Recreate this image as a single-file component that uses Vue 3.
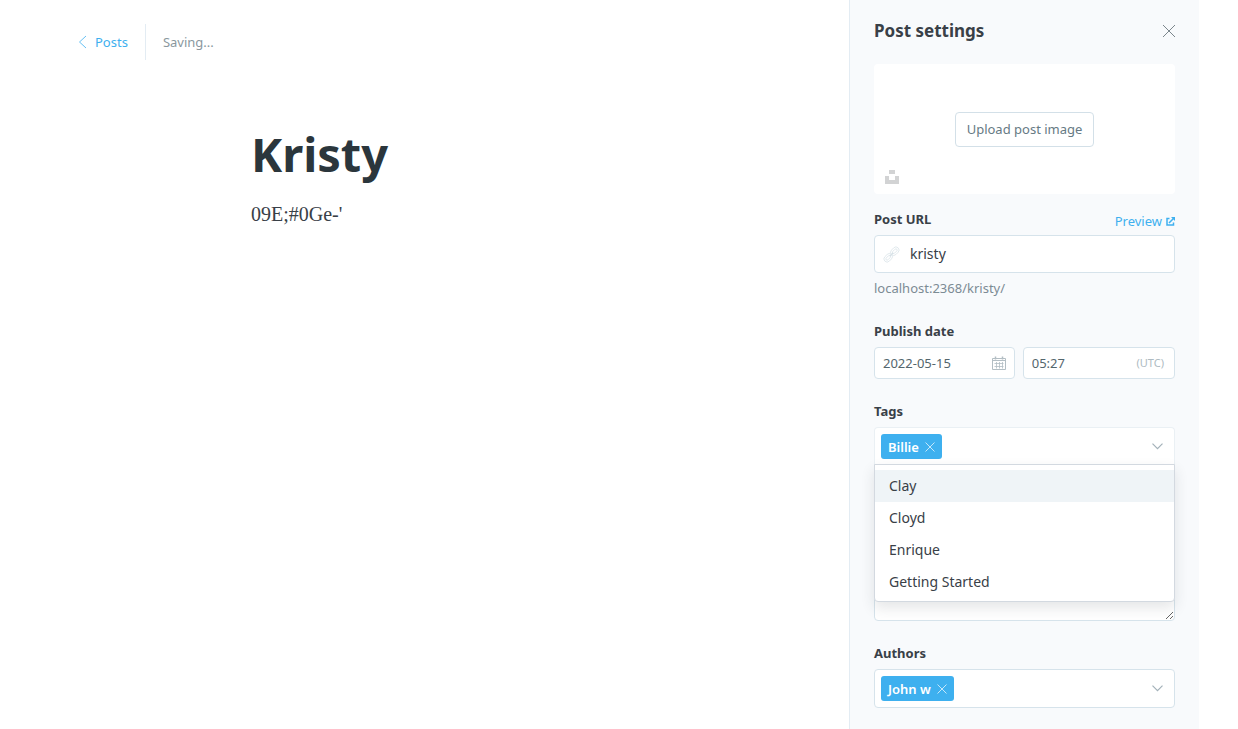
<script setup>
import { ref } from 'vue'

const slug = ref('kristy')
const date = ref('2022-05-15')
const time = ref('05:27')
const excerpt = ref('')
const options = ['Clay', 'Cloyd', 'Enrique', 'Getting Started']
const highlighted = ref(0)
</script>

<template>
  <div class="page">
    <main class="editor">
      <header class="topbar">
        <a class="back" href="#posts">
          <svg width="9" height="14" viewBox="0 0 9 14" fill="none" stroke="currentColor" stroke-width=".8"><path d="M8 1 1.500 7 8 13" /></svg>
          Posts
        </a>
        <span class="status">Saving...</span>
      </header>
      <article class="post">
        <h1>Kristy</h1>
        <p>09E;#0Ge-'</p>
      </article>
    </main>

    <aside class="settings">
      <header class="settings-head">
        <h2>Post settings</h2>
        <button class="icon-button" type="button" aria-label="Close">
          <svg width="14" height="14" viewBox="0 0 14 14" fill="none" stroke="#5a686f" stroke-width=".8"><path d="M1 1 13 13M13 1 1 13" /></svg>
        </button>
      </header>

      <section class="uploader">
        <button class="upload" type="button">Upload post image</button>
        <button class="icon-button unsplash" type="button" aria-label="Unsplash">
          <svg width="14" height="14" viewBox="0 0 14 14" fill="#d2d3d4"><path d="M4 0h6v4H4zM0 6h4v4h6V6h4v8H0z" /></svg>
        </button>
      </section>

      <div class="field">
        <div class="label-row">
          <label for="url">Post URL</label>
          <a class="preview" href="#preview">
            Preview
            <svg width="9" height="9" viewBox="0 0 18 18" fill="none" stroke="currentColor" stroke-width="3"><path d="M7 3H2v13h13v-5M6 12 15 3" /><path d="M10 0h8v8z" fill="currentColor" stroke="none" /></svg>
          </a>
        </div>
        <div class="control url">
          <svg width="15" height="15" viewBox="0 0 24 24" fill="none" stroke="#d6e0e6" stroke-width="1.100">
            <g transform="rotate(-45 12 12)">
              <rect x="-3" y="7" width="15" height="10" rx="5" />
              <rect x="0" y="10" width="9" height="4" rx="2" />
              <rect x="12" y="7" width="15" height="10" rx="5" />
              <rect x="15" y="10" width="9" height="4" rx="2" />
              <path d="M8 12h8" stroke-width="2" />
            </g>
          </svg>
          <input id="url" v-model="slug" type="text" />
        </div>
        <p class="help">localhost:2368/kristy/</p>
      </div>

      <div class="field">
        <label for="date">Publish date</label>
        <div class="date-row">
          <div class="control small date">
            <input id="date" v-model="date" type="text" />
            <svg width="14" height="14" viewBox="0 0 14 14" fill="none" stroke="#b3bec4"><path d="M.5 2.500h13v11H.5zM.5 4.500h13" /><path d="M2.500 7.500h9M2.500 10.500h9M4.500 6v6.500M7.500 6v6.500M10.500 6v6.500" stroke-width=".8" /><path d="M3.500.5v3M10.500.5v3" stroke-width="1.500" /></svg>
          </div>
          <div class="control small time">
            <input v-model="time" type="text" aria-label="Publish time" />
            <small>(UTC)</small>
          </div>
        </div>
      </div>

      <div class="field">
        <label for="tags">Tags</label>
        <div class="select-wrap">
          <div class="control select open">
            <span class="token">Billie
              <button type="button" aria-label="Remove Billie">
                <svg width="10" height="10" viewBox="0 0 10 10" fill="none" stroke="currentColor"><path d="M.5.5l9 9M9.500.5l-9 9" /></svg>
              </button>
            </span>
            <input id="tags" type="text" role="combobox" aria-expanded="true" aria-controls="tag-options" />
            <svg width="11" height="7" viewBox="0 0 11 7" fill="none" stroke="#a3b1b9" stroke-width="1.200"><path d="m.5.7 5 5 5-5" /></svg>
          </div>
          <ul id="tag-options" class="menu" role="listbox">
            <li v-for="(option, i) in options" :key="option" role="option" :aria-selected="i === highlighted" :class="{ active: i === highlighted }" @mouseenter="highlighted = i">{{ option }}</li>
          </ul>
        </div>
      </div>

      <div class="field excerpt">
        <textarea v-model="excerpt" aria-label="Excerpt"></textarea>
      </div>

      <div class="field">
        <label for="authors">Authors</label>
        <div class="control select">
          <span class="token">John w
            <button type="button" aria-label="Remove John w">
              <svg width="10" height="10" viewBox="0 0 10 10" fill="none" stroke="currentColor"><path d="M.5.5l9 9M9.500.5l-9 9" /></svg>
            </button>
          </span>
          <input id="authors" type="text" role="combobox" aria-expanded="false" />
          <svg width="11" height="7" viewBox="0 0 11 7" fill="none" stroke="#a3b1b9" stroke-width="1.200"><path d="m.5.7 5 5 5-5" /></svg>
        </div>
      </div>
    </aside>
  </div>
</template>

<style>
body {
  margin: 0;
  background: #fff;
}
</style>

<style scoped>
* {
  box-sizing: border-box;
}
.page {
  display: flex;
  min-height: 100vh;
  padding-right: 39px;
  font: 13px/20px "Noto Sans", "Open Sans", sans-serif;
  color: #394047;
}
h1,
h2,
p,
ul {
  margin: 0;
  padding: 0;
}
button {
  padding: 0;
  border: 0;
  background: none;
  color: inherit;
  font: inherit;
  cursor: pointer;
}
svg {
  display: block;
  flex: none;
  overflow: visible;
}
.editor {
  flex: 1;
  min-width: 0;
}
.topbar {
  display: flex;
  align-items: center;
  padding: 24px 0 0 78px;
}
.back {
  display: flex;
  align-items: center;
  gap: 8px;
  height: 36px;
  padding-right: 17px;
  border-right: 1px solid #e3ecf3;
  color: #3eb0ef;
  text-decoration: none;
}
.status {
  padding-left: 17px;
  color: #8a979e;
}
.post {
  padding: 64px 24px 0 251px;
}
h1 {
  color: #2b363c;
  font-size: 47px;
  font-weight: 700;
  line-height: 60px;
}
.post p {
  margin-top: 16px;
  font: 20px/28px "Liberation Serif", serif;
}
.settings {
  width: 350px;
  padding: 16px 24px 21px;
  border-left: 1px solid #e3ecf3;
  background: #f8fafc;
}
.settings-head {
  display: flex;
  align-items: center;
  justify-content: space-between;
  height: 30px;
}
h2 {
  font-size: 17px;
  font-weight: 700;
  line-height: 30px;
}
.icon-button {
  display: flex;
}
.settings-head .icon-button {
  margin-right: -1px;
}
.uploader {
  position: relative;
  display: flex;
  align-items: center;
  justify-content: center;
  height: 130px;
  margin: 18px 0 15px;
  border-radius: 4px;
  background: #fff;
}
.upload {
  height: 35px;
  padding: 0 11px;
  border: 1px solid #d3e0e8;
  border-radius: 4px;
  color: #667a84;
}
.unsplash {
  position: absolute;
  left: 11px;
  bottom: 10px;
}
.field + .field {
  margin-top: 22px;
}
.field + .excerpt {
  margin-top: 48px;
}
label {
  display: block;
  margin-bottom: 5px;
  font-weight: 700;
  line-height: 21px;
}
.label-row {
  display: flex;
  justify-content: space-between;
}
.preview {
  display: flex;
  align-items: center;
  gap: 4px;
  height: 24px;
  color: #3eb0ef;
  text-decoration: none;
}
.control {
  display: flex;
  align-items: center;
  height: 38px;
  border: 1px solid #d6e3eb;
  border-radius: 4px;
  background: #fff;
}
.control input {
  flex: 1;
  width: 0;
  min-width: 0;
  padding: 0;
  border: 0;
  outline: 0;
  background: none;
  color: inherit;
  font: inherit;
}
.url {
  gap: 11px;
  padding: 0 9px;
  font-size: 14px;
}
.help {
  margin-top: 4px;
  color: #7c8b94;
  line-height: 22px;
}
.date-row {
  display: flex;
  gap: 8px;
}
.small {
  height: 32px;
  padding: 0 8px;
  color: #54666d;
}
.date {
  flex: 141;
}
.time {
  flex: 152;
  padding-right: 10px;
}
.time small {
  color: #aebbc2;
  font-size: 11px;
}
.select-wrap {
  position: relative;
}
.select {
  height: 39px;
  padding: 0 11px 0 6px;
}
.open {
  border-color: #eaf0f4;
  border-bottom-color: #d3d9e0;
  border-radius: 4px 4px 0 0;
}
.token {
  display: flex;
  align-items: center;
  gap: 6px;
  height: 25px;
  padding: 0 7px;
  border-radius: 3px;
  background: #3eb0ef;
  color: #fff;
  font-weight: 600;
}
.token button {
  opacity: 0.7;
}
.menu {
  position: absolute;
  z-index: 1;
  top: 37px;
  left: 0;
  right: 0;
  padding: 5px 0 3px;
  border: 1px solid #d3d9e0;
  border-radius: 0 0 4px 4px;
  background: #fff;
  box-shadow: 0 6px 14px rgba(40, 50, 60, 0.12);
  list-style: none;
}
.menu li {
  padding: 0 14px;
  font-size: 14px;
  line-height: 32px;
}
.menu .active {
  background: #eff4f7;
}
textarea {
  display: block;
  width: 100%;
  height: 107px;
  padding: 8px;
  border: 1px solid #d6e3eb;
  border-radius: 4px;
  background: #fff;
  color: inherit;
  font: inherit;
  resize: vertical;
}
</style>
